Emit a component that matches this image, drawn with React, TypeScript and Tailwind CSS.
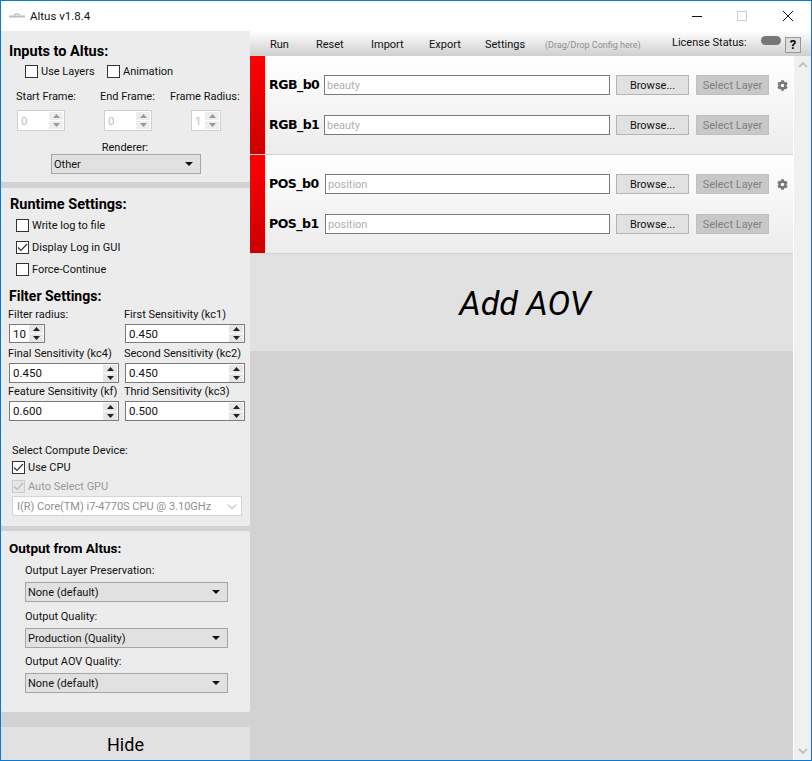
import React from "react";
import { FaCog } from "react-icons/fa";

function Check({ checked = false, disabled = false }: { checked?: boolean; disabled?: boolean }) {
  return (
    <span className={`flex h-[13px] w-[13px] shrink-0 items-center justify-center border ${disabled ? "border-[#cccccc] bg-[#e6e6e6]" : "border-[#333333] bg-white"}`}>
      {checked && (
        <svg width="11" height="11" viewBox="0 0 11 11" fill="none">
          <path d="M1 5.5 L4 8.5 L10 2" stroke={disabled ? "#bbbbbb" : "#333333"} strokeWidth="1.2" />
        </svg>
      )}
    </span>
  );
}

function CheckRow({ label, checked, disabled, cls }: { label: string; checked?: boolean; disabled?: boolean; cls: string }) {
  return (
    <div className={`flex h-[14px] items-center gap-[3px] ${cls}`}>
      <Check checked={checked} disabled={disabled} />
      <span className={`pt-[2px] ${disabled ? "text-[#9a9a9a]" : ""}`}>{label}</span>
    </div>
  );
}

function Spin({ value, disabled = false, cls }: { value: string; disabled?: boolean; cls: string }) {
  const arrow = disabled ? "#999999" : "#222222";
  return (
    <div className={`flex shrink-0 items-center border bg-white pr-px ${disabled ? "border-[#cfcfcf]" : "border-[#7a7a7a]"} ${cls}`}>
      <span className={`min-w-0 flex-1 pl-[3px] text-[11.5px] ${disabled ? "text-[#bdbdbd]" : ""}`}>{value}</span>
      <div className="flex w-[14px] flex-col gap-px">
        <span className={`flex h-[8px] items-center justify-center ${disabled ? "bg-[#eeeeee]" : "bg-[#e6e6e6]"}`}>
          <svg width="7" height="4" viewBox="0 0 7 4"><path d="M3.5 0 L7 4 H0 Z" fill={arrow} /></svg>
        </span>
        <span className={`flex h-[8px] items-center justify-center ${disabled ? "bg-[#eeeeee]" : "bg-[#e6e6e6]"}`}>
          <svg width="7" height="4" viewBox="0 0 7 4"><path d="M0 0 H7 L3.5 4 Z" fill={arrow} /></svg>
        </span>
      </div>
    </div>
  );
}

function Combo({ value, cls }: { value: string; cls: string }) {
  return (
    <div className={`flex h-[20px] items-center justify-between border border-[#a5a5a5] bg-[#e1e1e1] pl-[2px] pr-[7px] ${cls}`}>
      <span className="pt-[2px]">{value}</span>
      <svg width="8" height="4" viewBox="0 0 8 4"><path d="M0 0 H8 L4 4 Z" fill="#111111" /></svg>
    </div>
  );
}

function AovRow({ label, hint, gear, cls, inputCls }: { label: string; hint: string; gear?: boolean; cls: string; inputCls: string }) {
  return (
    <div className={`flex h-[20px] items-center ${cls}`}>
      <span className="w-[59px] shrink-0 whitespace-nowrap pl-[4px] font-['DejaVu_Sans',sans-serif] text-[12.5px] font-bold tracking-[-0.5px] text-black">{label}</span>
      <div className={`flex h-[20px] items-center border border-[#7a7a7a] bg-white pl-[2px] pt-[2px] text-[#b0b0b0] ${inputCls}`}>{hint}</div>
      <div className="ml-[6px] flex h-[20px] w-[73px] items-center justify-center border border-[#b4b4b4] bg-[#e1e1e1] pt-[2px]">Browse...</div>
      <div className="ml-[7px] flex h-[20px] w-[73px] items-center justify-center border border-[#c0c0c0] bg-[#c8c8c8] pt-[2px] text-[#808080]">Select Layer</div>
      {gear && <FaCog className="ml-[8px] text-[#777777]" size={11} />}
    </div>
  );
}

function AovGroup({ a, b, hint, cls, inputCls }: { a: string; b: string; hint: string; cls: string; inputCls: string }) {
  return (
    <div className={`flex h-[98px] bg-gradient-to-b from-white to-[#ececec] ${cls}`}>
      <div className="w-[15px] shrink-0 bg-gradient-to-b from-[#ff0000] to-[#cc0000]" />
      <div className="flex-1 pt-[19px]">
        <AovRow label={a} hint={hint} gear cls="" inputCls={inputCls} />
        <AovRow label={b} hint={hint} cls="mt-[20px]" inputCls={inputCls} />
      </div>
    </div>
  );
}

export default function App() {
  return (
    <div className="flex h-[761px] w-[812px] flex-col overflow-hidden whitespace-nowrap border border-[#0a7ad1] bg-white font-['Roboto',sans-serif] text-[11px] leading-[14px] text-[#111111]">
      <div className="flex h-[30px] shrink-0 items-center bg-white">
        <svg className="ml-[8px]" width="17" height="8" viewBox="0 0 17 8">
          <rect x="0" y="3.5" width="16" height="2" fill="#bdbdbd" />
          <path d="M5 3 Q8 0 11 3" stroke="#7ab0c8" strokeWidth="1" fill="none" />
        </svg>
        <span className="ml-[4px] text-[11.5px]">Altus v1.8.4</span>
        <div className="ml-auto flex items-center">
          <svg width="10" height="10" viewBox="0 0 10 10"><path d="M0 5.5 H10" stroke="#111111" /></svg>
          <svg className="ml-[35px]" width="10" height="10" viewBox="0 0 10 10"><rect x="0.5" y="0.5" width="9" height="9" fill="none" stroke="#cccccc" /></svg>
          <svg className="ml-[36px] mr-[18px]" width="10" height="10" viewBox="0 0 10 10"><path d="M0 0 L10 10 M10 0 L0 10" stroke="#222222" /></svg>
        </div>
      </div>

      <div className="flex min-h-0 flex-1">
        <aside className="flex w-[249px] shrink-0 flex-col bg-[#d2d2d2]">
          <section className="h-[151px] rounded-b-[2px] bg-[#ececec]">
            <h2 className="ml-[8px] mt-[13px] text-[14.5px] font-bold leading-[16px] text-black">Inputs to Altus:</h2>
            <div className="ml-[24px] mt-[4px] flex">
              <CheckRow label="Use Layers" cls="w-[82px]" />
              <CheckRow label="Animation" cls="" />
            </div>
            <div className="mt-[12px] flex">
              <span className="ml-[15px] w-[84px]">Start Frame:</span>
              <span className="w-[70px]">End Frame:</span>
              <span>Frame Radius:</span>
            </div>
            <div className="mt-[6px] flex">
              <Spin value="0" disabled cls="ml-[16px] h-[21px] w-[48px]" />
              <Spin value="0" disabled cls="ml-[39px] h-[21px] w-[48px]" />
              <Spin value="1" disabled cls="ml-[39px] h-[21px] w-[30px]" />
            </div>
            <div className="mt-[10px] pr-[1px] text-center">Renderer:</div>
            <Combo value="Other" cls="-mt-px ml-[50px] w-[150px]" />
          </section>
          <section className="mt-[6px] h-[338px] rounded-[2px] bg-[#ececec]">
            <h2 className="ml-[9px] mt-[9px] text-[14.5px] font-bold leading-[16px] text-black">Runtime Settings:</h2>
            <CheckRow label="Write log to file" cls="ml-[15px] mt-[5px]" />
            <CheckRow checked label="Display Log in GUI" cls="ml-[15px] mt-[8px]" />
            <CheckRow label="Force-Continue" cls="ml-[15px] mt-[8px]" />
            <h2 className="ml-[8px] mt-[12px] text-[14px] font-bold leading-[16px] text-black">Filter Settings:</h2>
            <div className="mt-[4px] flex">
              <div className="ml-[7px] w-[116px]">Filter radius:</div>
              <div>First Sensitivity (kc1)</div>
            </div>
            <div className="mt-[2px] flex">
              <Spin value="10" cls="ml-[8px] h-[19px] w-[36px]" />
              <Spin value="0.450" cls="ml-[80px] h-[19px] w-[120px]" />
            </div>
            <div className="mt-[4px] flex">
              <div className="ml-[7px] w-[116px]">Final Sensitivity (kc4)</div>
              <div>Second Sensitivity (kc2)</div>
            </div>
            <div className="mt-[2px] flex">
              <Spin value="0.450" cls="ml-[8px] h-[20px] w-[110px]" />
              <Spin value="0.450" cls="ml-[6px] h-[20px] w-[120px]" />
            </div>
            <div className="mt-[2px] flex">
              <div className="ml-[7px] w-[116px]">Feature Sensitivity (kf)</div>
              <div>Thrid Sensitivity (kc3)</div>
            </div>
            <div className="mt-[2px] flex">
              <Spin value="0.600" cls="ml-[8px] h-[20px] w-[110px]" />
              <Spin value="0.500" cls="ml-[6px] h-[20px] w-[120px]" />
            </div>
            <div className="ml-[11px] mt-[23px]">Select Compute Device:</div>
            <CheckRow checked label="Use CPU" cls="ml-[11px] mt-[2px]" />
            <CheckRow checked disabled label="Auto Select GPU" cls="ml-[11px] mt-[5px]" />
            <div className="ml-[11px] mt-[3px] flex h-[20px] w-[230px] items-center justify-between border border-[#d4d4d4] bg-white pl-[4px] pr-[4px] text-[#909090]">
              <span className="pt-[2px]">I(R) Core(TM) i7-4770S CPU @ 3.10GHz</span>
              <svg width="10" height="5" viewBox="0 0 10 5" fill="none"><path d="M0.5 0.5 L5 4.5 L9.5 0.5" stroke="#aaaaaa" /></svg>
            </div>
          </section>
          <section className="mt-[5px] h-[181px] rounded-[2px] bg-[#ececec]">
            <h2 className="ml-[8px] mt-[9px] text-[13.5px] font-bold leading-[16px] text-black">Output from Altus:</h2>
            <div className="ml-[24px] mt-[8px]">Output Layer Preservation:</div>
            <Combo value="None (default)" cls="ml-[24px] mt-[4px] w-[203px]" />
            <div className="ml-[24px] mt-[8px]">Output Quality:</div>
            <Combo value="Production (Quality)" cls="ml-[24px] mt-[4px] w-[203px]" />
            <div className="ml-[24px] mt-[7px]">Output AOV Quality:</div>
            <Combo value="None (default)" cls="ml-[24px] mt-[4px] w-[203px]" />
          </section>
          <div className="mt-[15px] flex h-[33px] items-center justify-center bg-[#e1e1e1] pt-[2px] text-[18px] text-black">Hide</div>
        </aside>

        <main className="flex min-w-0 flex-1 flex-col">
          <div className="flex h-[25px] shrink-0 items-center bg-gradient-to-b from-white to-[#cfcfcf] pt-[3px]">
            <span className="ml-[20px] w-[46px]">Run</span>
            <span className="w-[55px]">Reset</span>
            <span className="w-[58px]">Import</span>
            <span className="w-[56px]">Export</span>
            <span className="w-[60px]">Settings</span>
            <span className="w-[127px] text-[9px] text-[#8f8f8f]">(Drag/Drop Config here)</span>
            <span className="w-[89px] -mt-[5px]">License Status:</span>
            <span className="-mt-[9px] h-[9px] w-[20px] rounded-full bg-[#777777]" />
            <span className="ml-[4px] flex h-[16px] w-[16px] items-center justify-center border border-[#999999] bg-[#dddddd] text-[13px] font-bold text-black">?</span>
          </div>
          <div className="flex min-h-0 flex-1">
            <div className="flex w-[543px] shrink-0 flex-col bg-[#d2d2d2]">
              <AovGroup a="RGB_b0" b="RGB_b1" hint="beauty" cls="" inputCls="w-[286px]" />
              <AovGroup a="POS_b0" b="POS_b1" hint="position" cls="mt-px" inputCls="ml-px w-[285px]" />
              <div className="mt-px flex h-[97px] items-center justify-center bg-[#e1e1e1] pl-[7px] text-[34px] italic leading-none text-black">Add AOV</div>
            </div>
            <div className="flex w-[18px] flex-col items-center justify-between border-l border-white bg-[#f0f0f0] py-[6px]">
              <svg width="10" height="6" viewBox="0 0 10 6" fill="none"><path d="M1 5 L5 1 L9 5" stroke="#c4c4c4" strokeWidth="2" /></svg>
              <svg width="10" height="6" viewBox="0 0 10 6" fill="none"><path d="M1 1 L5 5 L9 1" stroke="#c4c4c4" strokeWidth="2" /></svg>
            </div>
          </div>
        </main>
      </div>
    </div>
  );
}
